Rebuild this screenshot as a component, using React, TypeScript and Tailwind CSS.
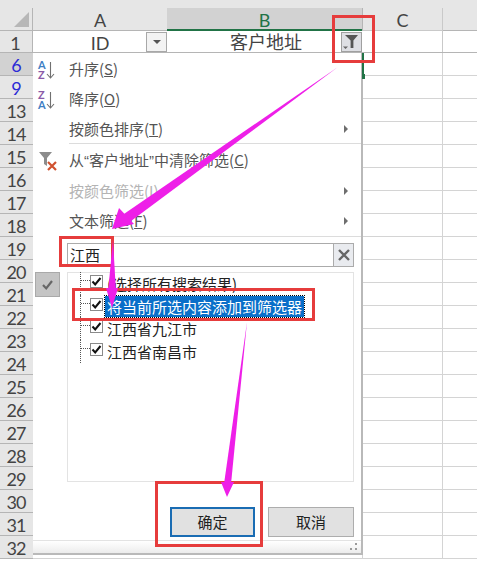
const rowNums = [6, 9, 13, 14, 15, 16, 17, 18, 19, 20, 21, 22, 23, 24, 25, 26, 27, 28, 29, 30, 31, 32]

const cjk = "font-['Noto_Sans_CJK_SC','Noto_Sans',sans-serif]"

function FilterIcon() {
  return (
    <svg width="20" height="20" viewBox="0 0 20 20">
      <path d="M1 1h13l-5 6v8l-3-2V7z" fill="#8c8c8c" />
      <path d="M10 11l8 8M18 11l-8 8" stroke="#d0512f" strokeWidth="2.2" fill="none" />
    </svg>
  )
}

function SortIcon({ top, bottom, topColor, bottomColor }: { top: string; bottom: string; topColor: string; bottomColor: string }) {
  return (
    <svg className="overflow-visible" width="17" height="19" viewBox="0 0 17 19">
      <text x="0" y="9" fontSize="11" fontWeight="700" fill={topColor} fontFamily="Lato, sans-serif">{top}</text>
      <text x="0" y="18.5" fontSize="11" fontWeight="700" fill={bottomColor} fontFamily="Lato, sans-serif">{bottom}</text>
      <path d="M12.5 2v16M9 14l3.5 4 3.5-4" stroke="#707070" strokeWidth="1.1" fill="none" />
    </svg>
  )
}

function MenuItem({ label, hot, gray, arrow, icon }: { label: React.ReactNode; hot: string; gray?: boolean; arrow?: boolean; icon?: React.ReactNode }) {
  return (
    <div className={`flex h-[30px] items-center text-[15px] ${gray ? "text-[#b4b4b4]" : "text-[#555]"}`}>
      <div className="flex w-[36px] justify-start pl-[5px]">{icon}</div>
      <span>
        {label}(<span className="underline">{hot}</span>)
      </span>
      {arrow && <div className="ml-auto mr-[13px] h-0 w-0 border-y-[4px] border-l-[4px] border-y-transparent border-l-[#6e6e6e]" />}
    </div>
  )
}

function CheckBox() {
  return (
    <div className="flex h-[13px] w-[13px] shrink-0 -translate-y-[2px] items-center justify-center border border-[#8a8a8a] bg-white">
      <svg width="11" height="11" viewBox="0 0 11 11">
        <path d="M1.5 5.5L4.2 8.5L9.5 2" stroke="#111" strokeWidth="2" fill="none" />
      </svg>
    </div>
  )
}

function TreeRow({ label, selected }: { label: string; selected?: boolean }) {
  return (
    <div className="flex h-[22.7px] items-center pl-[12px]">
      <div className="w-[10px] shrink-0 self-stretch border-l border-dotted border-[#555]">
        <div className="h-[9px] border-b border-dotted border-[#555]" />
      </div>
      <CheckBox />
      <span
        className={`ml-[2px] px-[2px] text-[15px] leading-[21px] ${selected ? "bg-[#0a6fc9] text-white outline-1 outline-dotted outline-black" : "text-[#222]"}`}
      >
        {label}
      </span>
    </div>
  )
}

export default function App() {
  return (
    <div className={`relative h-[564px] w-[477px] overflow-hidden bg-white ${cjk}`}>
      {/* ---------- column headers ----------- */}
      <div className="flex h-[31px] bg-[#e6e6e6] pt-[8px] text-[18px] text-[#444] font-['Lato',sans-serif]">
        <div className="relative w-[33px] border-r border-b border-[#b5b5b5]">
          <div className="absolute top-[4px] right-[3px] h-0 w-0 border-b-[15px] border-l-[15px] border-b-[#b7b7b7] border-l-transparent" />
        </div>
        <div className="flex w-[134px] items-center justify-center border-b border-[#b5b5b5] pt-[3px]">A</div>
        <div className="flex w-[195px] items-center justify-center border-b-2 border-[#217346] bg-[#d2d2d2] pt-[3px] text-[#217346]">B</div>
        <div className="flex w-[81px] items-center justify-center border-x border-b border-[#c9c9c9] border-l-[#b5b5b5] pt-[3px]">C</div>
        <div className="flex-1 border-b border-[#b5b5b5]" />
      </div>

      {/* ---------- row 1 ----------- */}
      <div className="flex h-[22px] border-b border-[#b5b5b5] text-[18px] text-[#444] font-['Lato',sans-serif]">
        <div className="flex w-[33px] items-center justify-center border-r border-[#b5b5b5] bg-[#e6e6e6] pt-[3px] pr-[1px]">1</div>
        <div className="relative flex w-[134px] items-center justify-center pt-[3px]">
          ID
          <div className="absolute top-[1px] right-0 flex h-[20px] w-[21px] items-center justify-center border border-[#a8a8a8] bg-[#f3f3f3]">
            <div className="h-0 w-0 border-x-[4px] border-t-[4px] border-x-transparent border-t-[#555]" />
          </div>
        </div>
        <div className={`relative flex w-[195px] items-center justify-center pl-[3px] text-[18px] ${cjk}`}>
          客户地址
          <div className="absolute top-[1px] right-0 flex h-[20px] w-[21px] items-center justify-center border border-[#a0a0a0] bg-[#dedfe4]">
            <svg width="17" height="16" viewBox="0 0 17 16">
              <path d="M2 1h13L10.4 6.5V14H7.6V6.5z" fill="#555" />
              <path d="M0 12.5h5L2.5 15z" fill="#666" />
            </svg>
          </div>
        </div>
        <div className="w-[81px] border-r border-[#c9c9c9]" />
      </div>

      {/* ---------- rows ----------- */}
      {rowNums.map((n, i) => (
        <div key={n} className="flex h-[23px] text-[18px] tracking-[-1px] font-['Lato',sans-serif]">
          <div
            className={`flex w-[33px] items-center justify-center border-b border-[#b5b5b5] pt-[3px] pr-[1px] ${i === 0 ? "bg-[#d2d2d2]" : "bg-[#e6e6e6]"} ${i < 2 ? "text-[#2b2bd6]" : "text-[#444]"}`}
          >
            {n}
          </div>
          <div className="w-[329px] border-b border-[#d4d4d4]" />
          <div className="w-[81px] border-x border-b border-[#d4d4d4]" />
          <div className="flex-1 border-b border-[#d4d4d4]" />
        </div>
      ))}

      {/* ---------- filter dropdown ----------- */}
      <div className="absolute top-[53px] left-[33px] flex h-[502px] w-[330px] flex-col border-r-2 border-b-2 border-[#b9b9b9] bg-white pt-[1px]">
        <MenuItem label="升序" hot="S" icon={<SortIcon top="A" bottom="Z" topColor="#3f7fc4" bottomColor="#8a5aa8" />} />
        <MenuItem label="降序" hot="O" icon={<SortIcon top="Z" bottom="A" topColor="#8a5aa8" bottomColor="#3f7fc4" />} />
        <MenuItem label="按颜色排序" hot="T" arrow />
        <div className="ml-[36px] mt-[-1px] mb-[2px] h-px bg-[#dcdcdc]" />
        <MenuItem
          label={
            <>
              从<span className="font-['Liberation_Sans',sans-serif]">“</span>客户地址
              <span className="font-['Liberation_Sans',sans-serif]">”</span>中清除筛选
            </>
          }
          hot="C"
          icon={<FilterIcon />}
        />
        <MenuItem label="按颜色筛选" hot="I" gray arrow />
        <MenuItem label="文本筛选" hot="F" arrow />
        <div className="ml-[36px] h-px bg-[#dcdcdc]" />

        <div className="ml-[34px] mt-[6px] flex h-[24px] w-[287px] border border-[#ababab] bg-white">
          <div className="flex-1 pl-[2px] text-[15px] leading-[22px] text-[#222]">江西</div>
          <div className="flex w-[20px] items-center justify-center border-l border-[#ababab] bg-[#e9ebef]">
            <svg width="12" height="12" viewBox="0 0 12 12">
              <path d="M1 1l10 10M11 1L1 11" stroke="#666" strokeWidth="2.4" fill="none" />
            </svg>
          </div>
        </div>

        <div className="mt-[5px] flex pl-[2px]">
          <div className="flex h-[25px] w-[25px] items-center justify-center border border-[#a9a9a9] bg-[#c4c4c4]">
            <svg width="13" height="13" viewBox="0 0 13 13">
              <path d="M2 7l3.2 3.4L11 3" stroke="#666" strokeWidth="2.2" fill="none" />
            </svg>
          </div>
          <div className="ml-[7px] h-[210px] w-[287px] border border-[#e3e3e3]">
            <div className="-mt-[1px]">
              <TreeRow label="(选择所有搜索结果)" />
              <TreeRow label="将当前所选内容添加到筛选器" selected />
              <TreeRow label="江西省九江市" />
              <TreeRow label="江西省南昌市" />
            </div>
          </div>
        </div>

        <div className="mt-[25px] flex gap-[13px] pl-[137px] text-[15px] text-[#222]">
          <div className="flex h-[30px] w-[85px] items-center justify-center border-2 border-[#1a6cb3] bg-[#e1e1e1]">确定</div>
          <div className="flex h-[30px] w-[86px] items-center justify-center border border-[#adadad] bg-[#e1e1e1]">取消</div>
        </div>

        <div className="mt-auto flex h-[13px] items-end justify-end border-t border-[#e3e3e3] bg-gradient-to-b from-white to-[#ececec] pr-[3px] pb-[2px]">
          <svg width="10" height="8" viewBox="0 0 10 8">
            <path d="M7 0h2v2H7zM2 5h2v2H2zM7 5h2v2H7z" fill="#9a9a9a" />
          </svg>
        </div>
      </div>

      {/* selection edge + fill handle of the active cell */}
      <div className="absolute top-[53px] left-[362px] h-[23px] w-[2px] bg-[#217346]" />
      <div className="absolute top-[74px] left-[362px] h-[5px] w-[3px] bg-[#217346]" />

      {/* ---------- annotations ----------- */}
      <div className="absolute top-[15px] left-[332px] h-[48px] w-[43px] border-[3px] border-[#e63c3c]" />
      <div className="absolute top-[236px] left-[59px] h-[31px] w-[55px] border-[3px] border-[#e63c3c]" />
      <div className="absolute top-[288px] left-[72px] h-[33px] w-[243px] border-[3px] border-[#e63c3c]" />
      <div className="absolute top-[481px] left-[155px] h-[66px] w-[108px] border-[3px] border-[#e63c3c]" />

      <svg className="absolute top-0 left-0" width="477" height="564" viewBox="0 0 477 564">
        <path d="M338 67L127 224L121 216z" fill="#ee1fe8" />
        <path d="M112 229L119 208L134 224z" fill="#ee1fe8" />
        <path d="M113 240L116 292L108 292z" fill="#ee1fe8" />
        <path d="M112 308L106 288L118 288z" fill="#ee1fe8" />
        <path d="M247 322L231 484L224 484z" fill="#ee1fe8" />
        <path d="M227 497L221 482L234 482z" fill="#ee1fe8" />
      </svg>
    </div>
  )
}
